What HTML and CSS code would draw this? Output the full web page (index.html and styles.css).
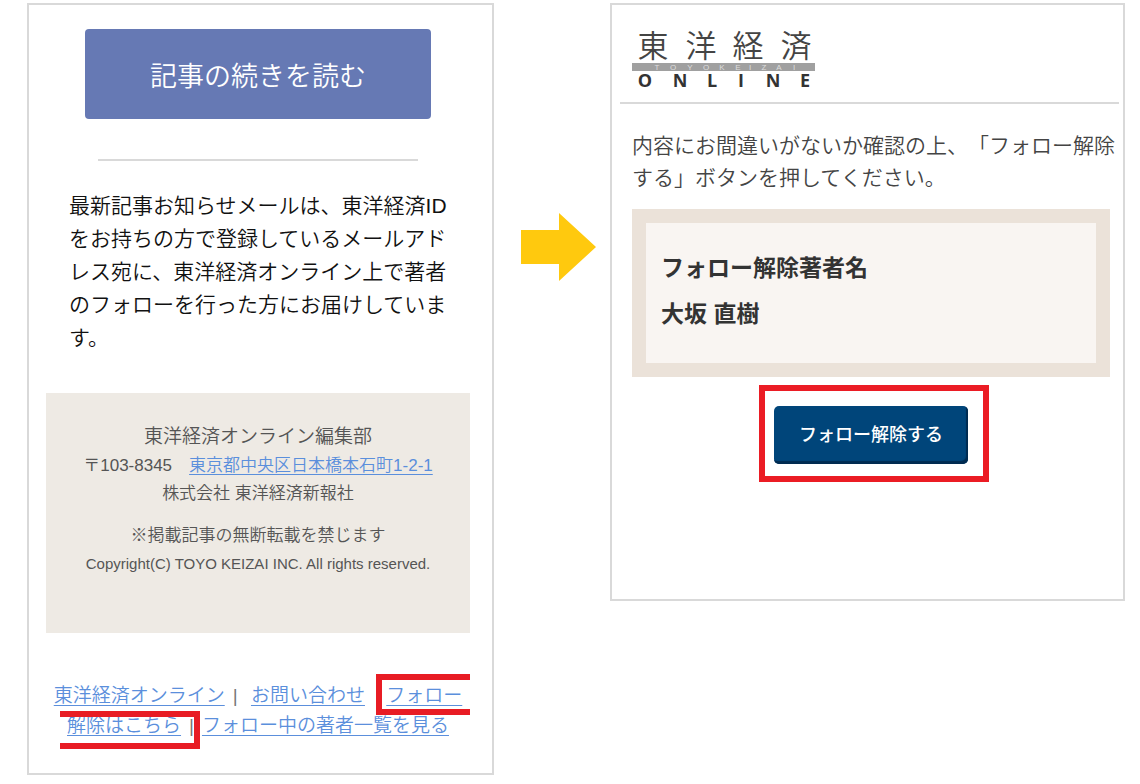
FILE: index.html
```html
<!DOCTYPE html>
<html lang="ja">
<head>
    <meta charset="UTF-8">
    <meta name="viewport" content="width=device-width, initial-scale=1.0">
    <title>フォロー解除の手順</title>
    <link rel="stylesheet" href="styles.css">
</head>
<body>

    <main class="steps">
        <section class="panel mail">
            <button type="button" class="read-more">記事の続きを読む</button>
            <hr class="divider">
            <p class="notice">最新記事お知らせメールは、東洋経済IDをお持ちの方で登録しているメールアドレス宛に、東洋経済オンライン上で著者のフォローを行った方にお届けしています。</p>

            <div class="company">
                <p class="dept">東洋経済オンライン編集部</p>
                <p>〒103-8345　<a href="#">東京都中央区日本橋本石町1-2-1</a></p>
                <p>株式会社 東洋経済新報社</p>
                <p class="caution">※掲載記事の無断転載を禁じます</p>
                <p class="copyright">Copyright(C) TOYO KEIZAI INC. All rights reserved.</p>
            </div>

            <nav class="links">
                <a href="#">東洋経済オンライン</a><span class="bar">|</span>
                <a href="#">お問い合わせ</a><span class="space"></span>
                <a href="#">フォロー<br>解除はこちら</a><span class="bar">|</span><a href="#">フォロー中の著者一覧を見る</a>
                <span class="mark mark-start"></span>
                <span class="mark mark-end"></span>
            </nav>
        </section>

        <svg class="arrow" width="75" height="68" viewBox="0 0 75 68" aria-hidden="true">
            <path d="M0 17H38V0L75 34L38 68V51H0Z" fill="#ffc90e"/>
        </svg>

        <section class="panel site">
            <header class="site-header">
                <svg class="logo" width="183" height="76" viewBox="0 -12 183 76" role="img" aria-label="東洋経済ONLINE">
                    <text class="logo-kanji" x="21 69 116 164" y="27">東洋経済</text>
                    <rect x="0" y="33" width="183" height="8" fill="#a0a0a0"/>
                    <text class="logo-roman" x="25 41 58 74 90 106 118 132 147 162" y="40">TOYOKEIZAI</text>
                    <text class="logo-online" x="13 48 80 109 141 173" y="57">ONLINE</text>
                </svg>
            </header>
            <p class="confirm">内容にお間違いがないか確認の上、「フォロー解除する」ボタンを押してください。</p>
            <div class="author">
                <p>フォロー解除著者名</p>
                <p>大坂 直樹</p>
            </div>
            <div class="highlight">
                <button type="button" class="unfollow">フォロー解除する</button>
            </div>
        </section>
    </main>

</body>
</html>
```

FILE: styles.css
```css
* {
    box-sizing: border-box;
}
body {
    margin: 0;
    background: white;
    color: #222;
    font-family: "Liberation Sans", "Noto Sans CJK JP", sans-serif;
    font-weight: 350;
    text-spacing-trim: space-all;
}
p {
    margin: 0;
}
a {
    color: #5b8fdc;
    text-underline-offset: 3px;
    text-decoration-thickness: 1px;
}
button {
    border: none;
    padding: 0;
    font-family: inherit;
    color: white;
    cursor: pointer;
}
.steps {
    display: grid;
    grid-template-columns: minmax(0, 467fr) auto minmax(0, 515fr);
    align-items: start;
    padding: 3px 15px 9px 27px;
}
.panel {
    border: 2px solid #d9d9d9;
}

/* mail */
.mail {
    padding: 24px 22px 22px 17px;
}
.read-more {
    display: block;
    width: calc(100% - 78px);
    height: 90px;
    margin: 0 auto;
    border-radius: 4px;
    background: #6679b4;
    font-size: 27px;
    font-weight: 350;
}
.divider {
    height: 2px;
    margin: 40px 52px 28px;
    border: none;
    background: #d9d9d9;
}
.notice {
    padding: 0 16px 0 23px;
    font-size: 21px;
    line-height: 33px;
    color: #111;
}
.company {
    margin-top: 39px;
    padding: 29px 0 55px;
    background: #eeeae4;
    color: #555;
    font-size: 17px;
    line-height: 28px;
    text-align: center;
}
.company .dept {
    font-size: 19px;
    line-height: 30px;
}
.company .caution {
    margin-top: 14px;
}
.company .copyright {
    font-size: 15px;
}
.links {
    position: relative;
    margin-top: 48px;
    padding-bottom: 10px;
    font-size: 19px;
    line-height: 30px;
    text-align: center;
    white-space: nowrap;
}
.bar {
    padding: 0 8px;
    color: #777;
}
.space {
    padding: 0 8px;
}
/* red frame that runs over the line break */
.mark {
    position: absolute;
    border: 6px solid #e81c24;
}
.mark-start {
    top: -7px;
    right: 0;
    width: 94px;
    height: 41px;
    border-right: none;
}
.mark-end {
    top: 30px;
    left: 14px;
    width: 140px;
    height: 38px;
    border-left: none;
}

.arrow {
    margin: 210px 14px 0 27px;
}

/* site */
.site {
    padding: 13px 4px 117px 8px;
}
.site-header {
    padding: 0 12px 8px;
    border-bottom: 2px solid #d9d9d9;
}
.logo {
    display: block;
}
.logo text {
    text-anchor: middle;
}
.logo-kanji {
    font-size: 31px;
    fill: #444;
}
.logo-roman {
    font-size: 8px;
    fill: #ddd;
}
.logo-online {
    font-family: "Open Sans", sans-serif;
    font-size: 18px;
    font-weight: 700;
    fill: #333;
}
.confirm {
    padding: 26px 0 15px 12px;
    font-size: 21px;
    line-height: 32px;
    color: #444;
}
.author {
    margin: 0 9px 0 12px;
    padding: 22px 15px 26px;
    border: 14px solid #ebe2d9;
    background: #f9f5f2;
    color: #333;
    font-size: 23px;
    font-weight: 700;
    line-height: 46px;
}
.highlight {
    width: 230px;
    margin: 8px 130px 0 auto;
    padding: 15px 15px 12px 9px;
    border: 6px solid #eb1c24;
}
.unfollow {
    display: block;
    width: 100%;
    height: 58px;
    padding-bottom: 4px;
    border-radius: 5px;
    background: #00457a;
    box-shadow: inset -2px -3px 1px #002b50;
    font-size: 18px;
    font-weight: 500;
}
```
